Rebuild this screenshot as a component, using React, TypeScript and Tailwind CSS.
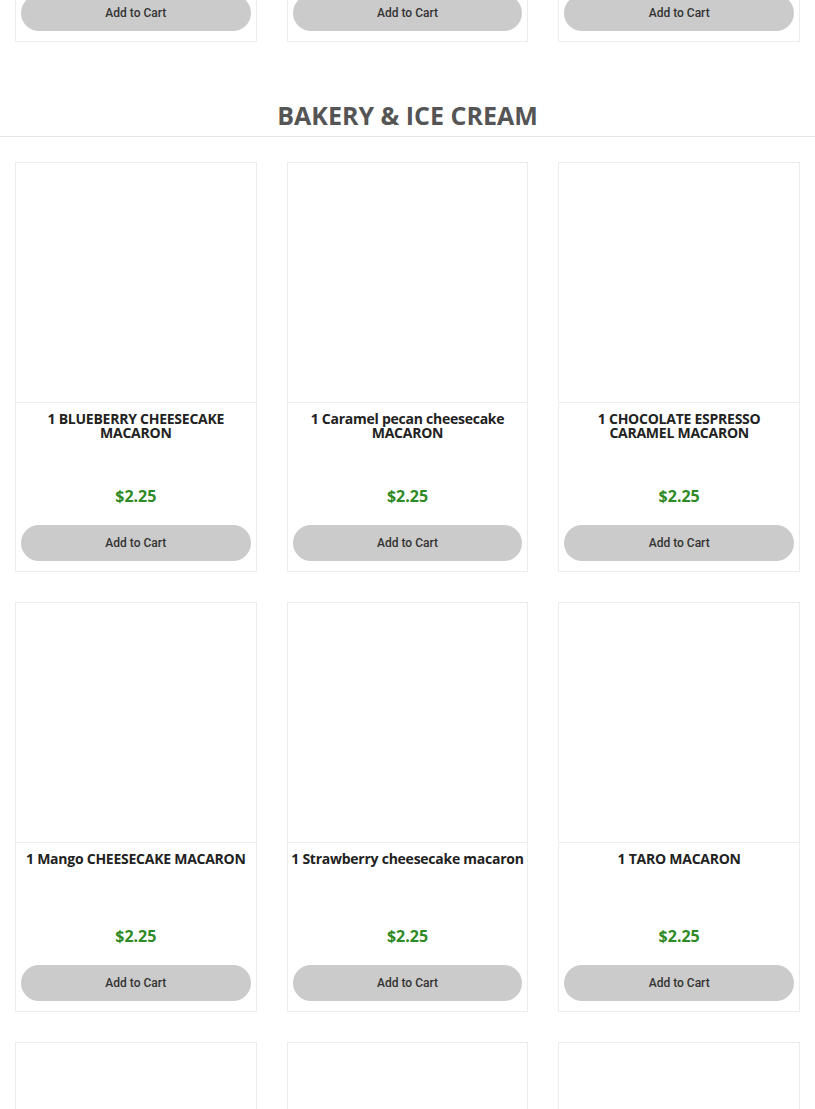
type Product = { name: string; price: string }

const previous: Product[] = [
  { name: "", price: "$2.25" },
  { name: "", price: "$2.25" },
  { name: "", price: "$2.25" },
]

const bakery: Product[] = [
  { name: "1 BLUEBERRY CHEESECAKE\nMACARON", price: "$2.25" },
  { name: "1 Caramel pecan cheesecake\nMACARON", price: "$2.25" },
  { name: "1 CHOCOLATE ESPRESSO\nCARAMEL MACARON", price: "$2.25" },
  { name: "1 Mango CHEESECAKE MACARON", price: "$2.25" },
  { name: "1 Strawberry cheesecake macaron", price: "$2.25" },
  { name: "1 TARO MACARON", price: "$2.25" },
  { name: "", price: "$2.25" },
  { name: "", price: "$2.25" },
  { name: "", price: "$2.25" },
]

function ProductCard({ product }: { product: Product }) {
  return (
    <div className="border border-[#ececec] bg-white flex flex-col">
      <div className="h-[240px] border-b border-[#ececec]" />
      <div className="flex flex-col px-[5px] pb-[10px]">
        <div className="mt-[9px] h-[70px] -mx-[3px] whitespace-pre text-center text-[14px] leading-[14px] font-bold text-[#222] font-['Open_Sans',sans-serif] tracking-[-0.25px]">
          {product.name}
        </div>
        <div className="mt-[4px] h-[20px] text-center text-[16px] leading-[20px] font-bold text-[#2e8a24] font-['Open_Sans',sans-serif]">
          {product.price}
        </div>
        <button className="mt-[19px] h-[36px] w-full rounded-full bg-[#cbcbcb] text-[12px] font-medium text-[#333] font-['Roboto',sans-serif]">
          Add to Cart
        </button>
      </div>
    </div>
  )
}

export default function App() {
  return (
    <div className="min-h-screen bg-white overflow-hidden">
      <div className="-mt-[368px] px-[15px] grid grid-cols-3 gap-x-[30px]">
        {previous.map((p, i) => (
          <ProductCard key={i} product={p} />
        ))}
      </div>

      <div className="mt-[57px] border-b border-[#e6e6e6] pb-[5px]">
        <h2 className="text-center text-[25px] leading-[32px] font-bold text-[#555] uppercase font-['Open_Sans',sans-serif]">
          Bakery &amp; Ice Cream
        </h2>
      </div>

      <div className="mt-[25px] px-[15px] grid grid-cols-3 gap-x-[30px] gap-y-[30px]">
        {bakery.map((p, i) => (
          <ProductCard key={i} product={p} />
        ))}
      </div>
    </div>
  )
}
